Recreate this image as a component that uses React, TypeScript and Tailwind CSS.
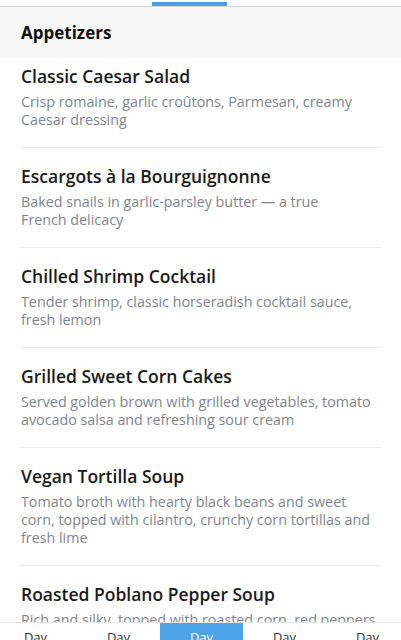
const items = [
  {
    name: 'Classic Caesar Salad',
    desc: ['Crisp romaine, garlic croûtons, Parmesan, creamy', 'Caesar dressing'],
  },
  {
    name: 'Escargots à la Bourguignonne',
    desc: ['Baked snails in garlic-parsley butter — a true', 'French delicacy'],
  },
  {
    name: 'Chilled Shrimp Cocktail',
    desc: ['Tender shrimp, classic horseradish cocktail sauce,', 'fresh lemon'],
  },
  {
    name: 'Grilled Sweet Corn Cakes',
    desc: ['Served golden brown with grilled vegetables, tomato', 'avocado salsa and refreshing sour cream'],
  },
  {
    name: 'Vegan Tortilla Soup',
    desc: [
      'Tomato broth with hearty black beans and sweet',
      'corn, topped with cilantro, crunchy corn tortillas and',
      'fresh lime',
    ],
  },
  {
    name: 'Roasted Poblano Pepper Soup',
    desc: ['Rich and silky, topped with roasted corn, red peppers', 'and a touch of cream'],
  },
];

const days = [1, 2, 3, 4, 5];

export default function App() {
  return (
    <div
      className="flex h-[640px] flex-col overflow-hidden bg-white"
      style={{ fontFamily: '"Open Sans", Lato, sans-serif' }}
    >
      {/* top tab indicator strip */}
      <div className="h-[7px] shrink-0 border-b border-[#d4d4d4] bg-white">
        <div className="ml-[152px] mt-[2px] h-[4px] w-[75px] bg-[#4a9fe6]" />
      </div>

      <div className="flex h-[51px] shrink-0 items-center bg-[#f7f7f7] px-[21px]">
        <h2 className="text-[17px] font-bold text-[#111]">Appetizers</h2>
      </div>

      <div className="flex-1 overflow-hidden">
        {items.map((item, i) => (
          <div
            key={item.name}
            className={`mx-[20px] border-b border-[#ececec] pb-[18px] pl-px ${
              i === 0 ? 'pt-[7px]' : 'pt-[17px]'
            }`}
          >
            <h3 className="text-[17.5px] font-semibold leading-[22px] text-[#1a1a1a]">
              {item.name}
            </h3>
            <p className="mt-[6px] text-[14.3px] leading-[18px] text-[#80858e]">
              {item.desc.map((line) => (
                <span key={line} className="block whitespace-nowrap">
                  {line}
                </span>
              ))}
            </p>
          </div>
        ))}
      </div>

      {/* bottom day tabs, partly off screen */}
      <div className="h-[18px] shrink-0 overflow-hidden border-t border-[#e6e6e6] bg-white">
        <div className="-ml-[6px] flex">
          {days.map((d) => (
            <div
              key={d}
              className={`flex h-[44px] w-[83px] shrink-0 justify-center pt-[6px] text-[13px] leading-[16px] ${
                d === 3 ? 'bg-[#4fa3e8] text-white' : 'text-[#333]'
              }`}
            >
              Day
            </div>
          ))}
        </div>
      </div>
    </div>
  );
}
